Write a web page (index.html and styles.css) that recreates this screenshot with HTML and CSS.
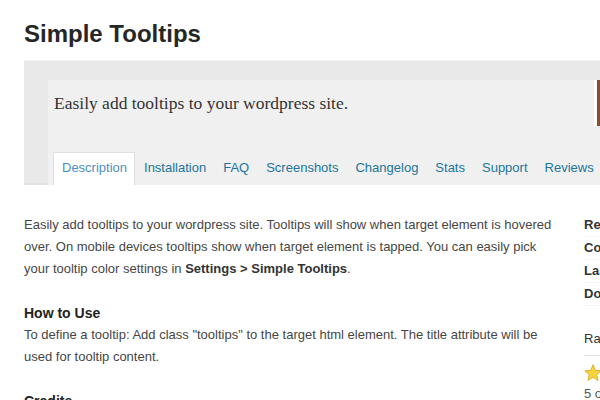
FILE: index.html
```html
<!DOCTYPE html>
<html lang="en">
<head>
    <meta charset="UTF-8">
    <meta name="viewport" content="width=device-width, initial-scale=1.0">
    <title>Simple Tooltips</title>
    <link rel="stylesheet" href="styles.css">
</head>
<body>

    <div class="page">
        <h1 class="plugin-title">Simple Tooltips</h1>

        <div class="plugin-header">
            <div class="header-inner">
                <div class="banner-row">
                    <p class="short-desc">Easily add tooltips to your wordpress site.</p>
                    <div class="plugin-icon"></div>
                </div>
                <ul class="tabs">
                    <li class="tab active"><a href="#">Description</a></li>
                    <li class="tab"><a href="#">Installation</a></li>
                    <li class="tab"><a href="#">FAQ</a></li>
                    <li class="tab"><a href="#">Screenshots</a></li>
                    <li class="tab"><a href="#">Changelog</a></li>
                    <li class="tab"><a href="#">Stats</a></li>
                    <li class="tab"><a href="#">Support</a></li>
                    <li class="tab"><a href="#">Reviews</a></li>
                </ul>
            </div>
        </div>

        <div class="content">
            <div class="main">
                <p>Easily add tooltips to your wordpress site. Tooltips will show when target element is hovered over. On mobile devices tooltips show when target element is tapped. You can easily pick your tooltip color settings in <b>Settings &gt; Simple Tooltips</b>.</p>

                <h3>How to Use</h3>
                <p>To define a tooltip: Add class "tooltips" to the target html element. The title attribute will be used for tooltip content.</p>

                <h3>Credits</h3>
            </div>

            <div class="sidebar">
                <ul class="meta">
                    <li><b>Requires:</b> 3.0 or higher</li>
                    <li><b>Compatible up to:</b> 4.0</li>
                    <li><b>Last Updated:</b> 2014-9-4</li>
                    <li><b>Downloads:</b> 5,280</li>
                </ul>
                <h4 class="ratings">Ratings</h4>
                <div class="stars">
                    <svg width="18" height="17" viewBox="0 0 24 23">
                        <polygon points="12,1 15,8.6 23,9.2 16.9,14.4 18.8,22.2 12,18 5.2,22.2 7.1,14.4 1,9.2 9,8.6" fill="#f7d63c" stroke="#d9a81e" stroke-width="1.2"/>
                    </svg>
                </div>
                <p class="rating-text">5 out of 5 stars</p>
            </div>
        </div>
    </div>

</body>
</html>
```

FILE: styles.css
```css
*{
    margin: 0;
    padding: 0;
    box-sizing: border-box;
}
body{
    font-family: "Liberation Sans", Arial, sans-serif;
    background-color: #fff;
    color: #464646;
    width: 600px;
    height: 400px;
    overflow: hidden;
}
.page{
    padding: 20px 0 0 24px;
    width: 800px;
}
.plugin-title{
    font-size: 24px;
    line-height: 28px;
    font-weight: bold;
    color: #262626;
    height: 40px;
}
.plugin-header{
    background-color: #e9e9e9;
    border-top: 1px solid #f2f2f2;
    padding: 19px 0 0 24px;
    border-bottom: 2px solid #e2e2e2;
}
.header-inner{
    background-color: #f0f0f0;
}
.banner-row{
    display: flex;
    height: 72px;
}
.short-desc{
    font-family: "Liberation Serif", "Times New Roman", serif;
    font-size: 17.5px;
    color: #333;
    padding: 13px 0 0 6px;
    width: 546px;
}
.plugin-icon{
    width: 60px;
    height: 46px;
    background-color: #8e4a2c;
    border-left: 3px solid #fff;
}
.tabs{
    list-style: none;
    display: flex;
    padding-left: 5px;
    margin-bottom: -2px;
}
.tab a{
    display: block;
    font-size: 13px;
    line-height: 29px;
    padding: 0 7px 0 8px;
    color: #21759b;
    text-decoration: none;
    border: 1px solid transparent;
    border-bottom: none;
    height: 33px;
}
.tab.active a{
    background-color: #fff;
    border-color: #dfdfdf;
    color: #4e8ec1;
}
.content{
    display: flex;
    gap: 24px;
    padding-top: 29px;
}
.main{
    width: 536px;
    font-size: 13px;
    line-height: 22px;
}
.main p{
    margin-bottom: 22px;
}
.main b{
    color: #333;
}
.main h3{
    font-size: 14px;
    line-height: 22px;
    color: #222;
    font-weight: bold;
}
.sidebar{
    width: 200px;
    font-size: 13px;
    line-height: 22px;
    color: #333;
}
.meta{
    list-style: none;
}
.meta li{
    border-bottom: 1px solid #f3f3f3;
}
.ratings{
    font-size: 13px;
    font-weight: normal;
    margin-top: 22px;
    padding-bottom: 5px;
    border-bottom: 1px solid #ddd;
}
.stars{
    padding-top: 8px;
    height: 27px;
}
.rating-text{
    color: #555;
}
```
